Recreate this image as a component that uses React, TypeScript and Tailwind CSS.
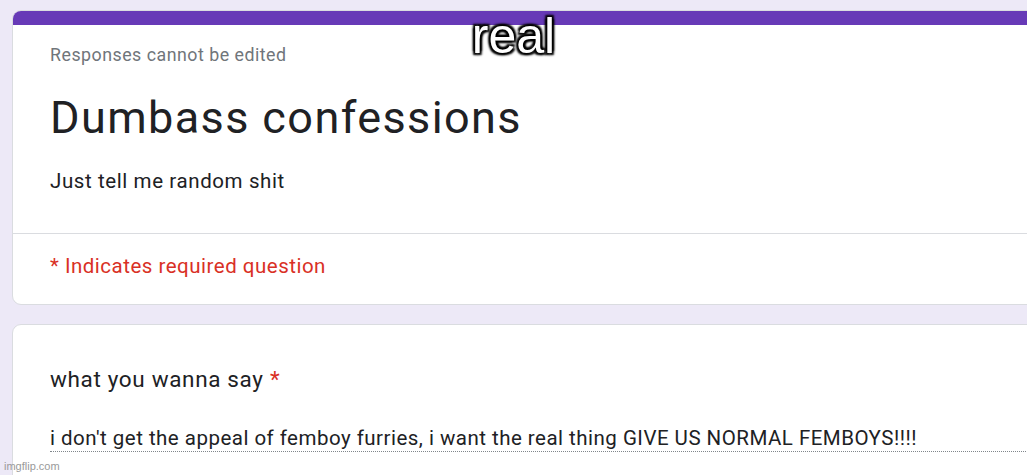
import React from "react"

export default function App() {
  return (
    <div
      className="relative w-[1027px] h-[475px] overflow-hidden bg-[#ede9f7]"
      style={{ fontFamily: "Roboto, 'Liberation Sans', sans-serif" }}
    >
      <div className="flex flex-col gap-[19px] pl-[12px] pt-[10px] w-[1110px]">
        {/* header card */}
        <div className="rounded-[9px] bg-white border border-[#dadce0] overflow-hidden">
          <div className="h-[15px] bg-[#673ab7] -mx-px -mt-px" />
          <div className="pl-[37px] pt-[18px] pb-[39px] border-b border-[#dadce0]">
            <div className="text-[17.8px] leading-[24px] tracking-[0.5px] text-[#70757a]">Responses cannot be edited</div>
            <h1 className="mt-[25px] text-[45px] leading-[52px] tracking-[1.4px] text-[#202124]">Dumbass confessions</h1>
            <p className="mt-[24px] text-[20.5px] leading-[26px] tracking-[0.6px] text-[#202124]">Just tell me random shit</p>
          </div>
          <div className="pl-[37px] pt-[19px] pb-[25px]">
            <p className="text-[20.5px] leading-[26px] tracking-[0.5px] text-[#d93025]">* Indicates required question</p>
          </div>
        </div>

        {/* question card */}
        <div className="rounded-[9px] bg-white border border-[#dadce0] h-[200px] pl-[37px] pt-[39px]">
          <div className="text-[22.5px] leading-[30px] tracking-[0.65px] text-[#202124]">
            what you wanna say <span className="text-[#d93025]">*</span>
          </div>
          <div className="mt-[31px] text-[20.5px] leading-[26px] tracking-[0.48px] text-[#202124] border-b border-dotted border-[#80868b] w-[1040px]">
            i don't get the appeal of femboy furries, i want the real thing GIVE US NORMAL FEMBOYS!!!!
          </div>
        </div>
      </div>

      {/* imgflip caption */}
      <div
        className="absolute left-0 right-0 top-[8px] text-center text-[50px] leading-[56px] text-white"
        style={{
          fontFamily: "'Liberation Sans', Arial, sans-serif",
          textShadow:
            "0 0 4px #000, 2px 2px 2px #000, -2px -2px 2px #000, 2px -2px 2px #000, -2px 2px 2px #000",
        }}
      >
        real
      </div>

      {/* watermark */}
      <div
        className="absolute left-[4px] bottom-[2px] text-[11px] leading-[14px] text-[#9a9a9a]"
        style={{ fontFamily: "'Liberation Sans', Arial, sans-serif" }}
      >
        imgflip.com
      </div>
    </div>
  )
}
